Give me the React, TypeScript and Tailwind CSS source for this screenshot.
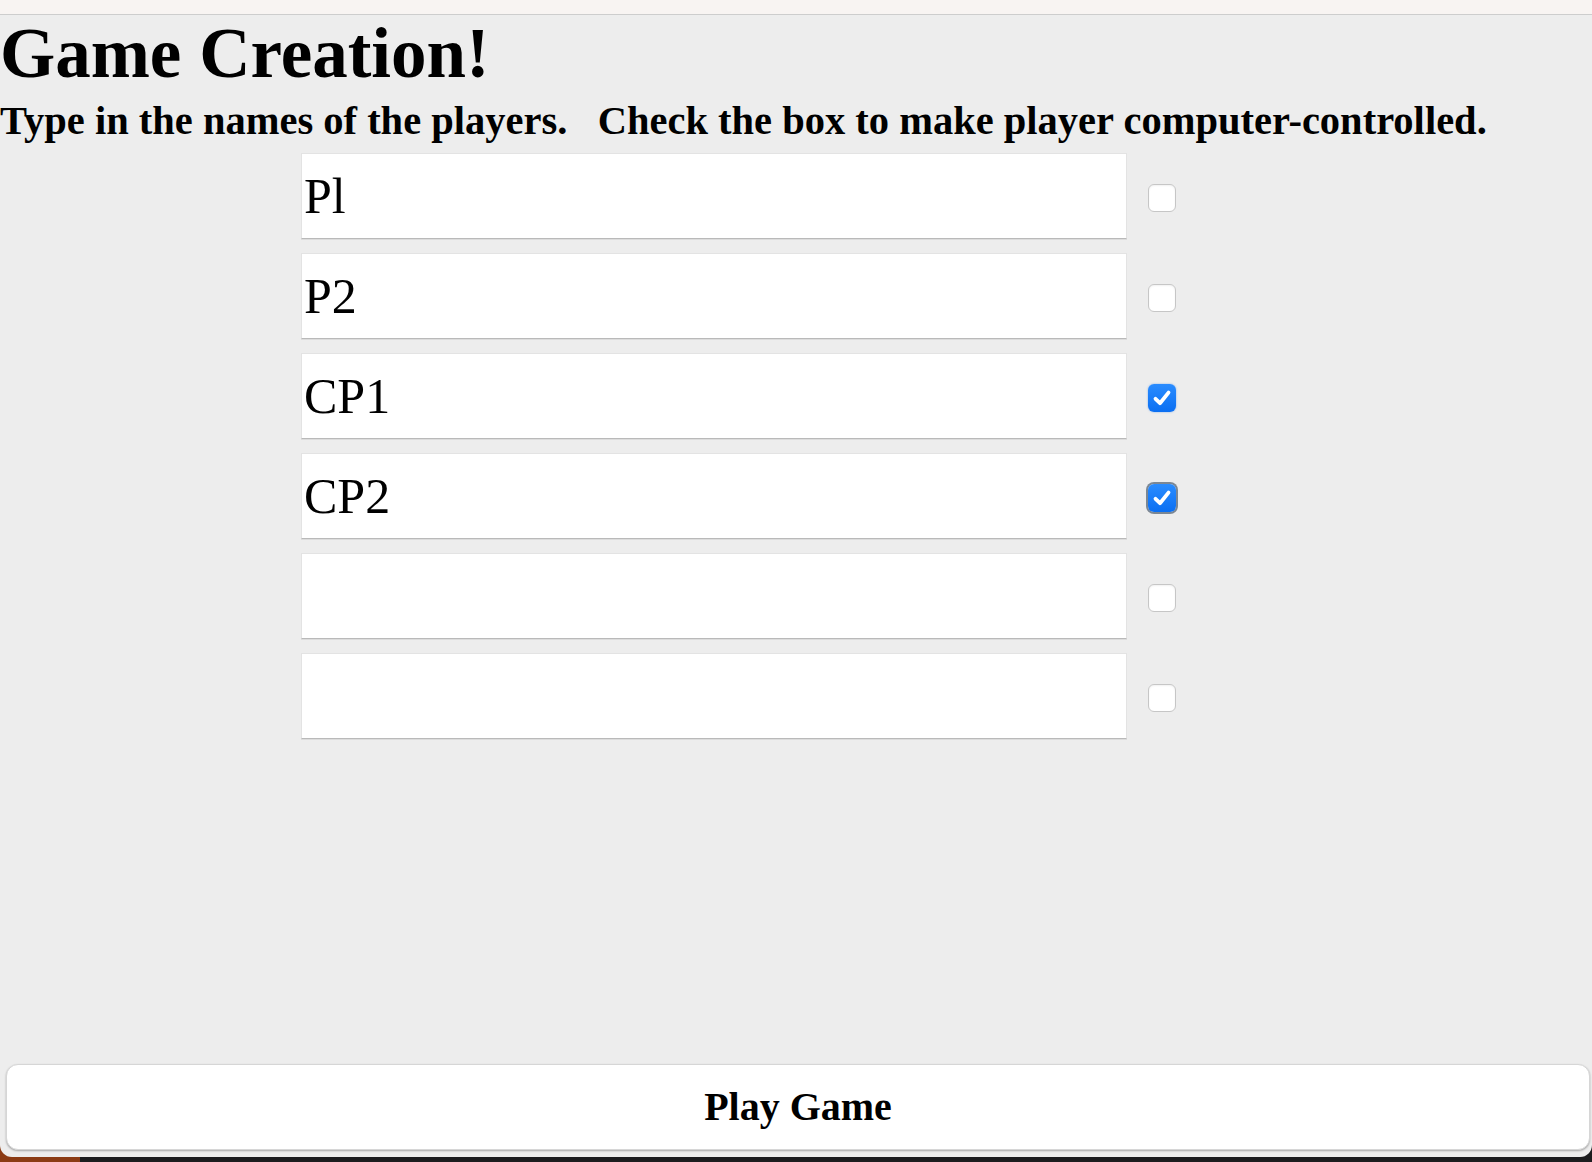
import React, { useState } from 'react';

const serif = { fontFamily: '"Liberation Serif", "Times New Roman", serif' };

type Player = { name: string; cpu: boolean };

const initialPlayers: Player[] = [
  { name: 'Pl', cpu: false },
  { name: 'P2', cpu: false },
  { name: 'CP1', cpu: true },
  { name: 'CP2', cpu: true },
  { name: '', cpu: false },
  { name: '', cpu: false },
];

function CpuBox({ checked, focused, onToggle }: { checked: boolean; focused?: boolean; onToggle: () => void }) {
  if (checked) {
    return (
      <button
        type="button"
        onClick={onToggle}
        className={
          'mt-[3px] w-[28px] h-[28px] rounded-[6px] flex items-center justify-center bg-[linear-gradient(#2a8cff,#0b6ff2)] ' +
          (focused ? 'ring-[2px] ring-[#7b8794]' : 'shadow-[0_0_2px_rgba(10,110,240,0.5)]')
        }
      >
        <svg width="28" height="28" viewBox="0 0 28 28" fill="none">
          <path d="M7.5 14.8 L12 19.2 L20.5 8.6" stroke="white" strokeWidth="3.8" strokeLinecap="round" strokeLinejoin="round" />
        </svg>
      </button>
    );
  }
  return (
    <button
      type="button"
      onClick={onToggle}
      className="mt-[3px] w-[28px] h-[28px] rounded-[6px] bg-white border border-[#c6c6c6] shadow-[inset_0_1px_2px_rgba(0,0,0,0.06)]"
    />
  );
}

export default function App() {
  const [players, setPlayers] = useState<Player[]>(initialPlayers);

  const update = (i: number, patch: Partial<Player>) =>
    setPlayers((p) => p.map((pl, idx) => (idx === i ? { ...pl, ...patch } : pl)));

  return (
    <div className="h-[1162px] w-full overflow-hidden flex flex-col bg-[linear-gradient(to_right,#8b3b14_80px,#1c1c1e_80px)]" style={serif}>
      <div className="h-[1157px] flex flex-col bg-[#ededed] rounded-b-[12px] text-black">
        {/* top chrome strip */}
        <div className="h-[15px] shrink-0 bg-[#f8f4f2] border-b border-[#cdcdcd]" />

        <h1 className="text-[71px] leading-[77px] font-bold">Game Creation!</h1>
        <h2 className="mt-[7px] text-[40.5px] leading-[44px] font-bold whitespace-pre">
          {'Type in the names of the players.   Check the box to make player computer-controlled.'}
        </h2>

        <div className="mt-[10px] ml-[301px] flex flex-col gap-[14px]">
          {players.map((p, i) => (
            <div key={i} className="flex items-center gap-[21px]">
              <input
                type="text"
                value={p.name}
                onChange={(e) => update(i, { name: e.target.value })}
                className="w-[826px] h-[86px] bg-white border border-[#e3e3e3] border-b-[#b9b9b9] pl-[2px] text-[50px] outline-none shadow-[0_1px_0_#dcdcdc]"
                style={serif}
              />
              <CpuBox checked={p.cpu} focused={i === 3} onToggle={() => update(i, { cpu: !p.cpu })} />
            </div>
          ))}
        </div>

        <div className="mt-auto mb-[7px] ml-[6px] mr-[2px]">
          <button
            type="button"
            className="w-full h-[86px] bg-white rounded-[12px] border border-[#d6d6d6] shadow-[0_1px_2px_rgba(0,0,0,0.3)] text-[40px] font-bold"
            style={serif}
          >
            Play Game
          </button>
        </div>
      </div>
    </div>
  );
}
